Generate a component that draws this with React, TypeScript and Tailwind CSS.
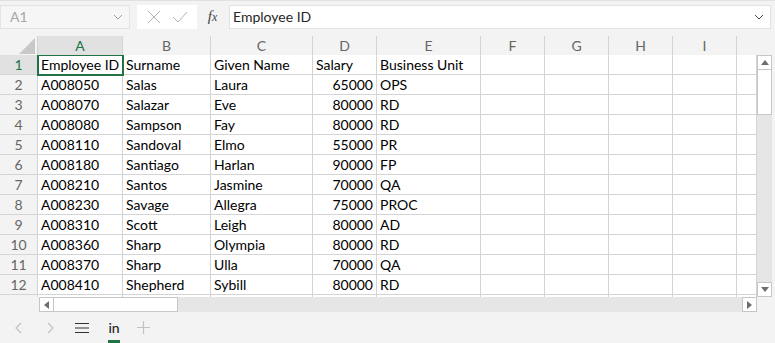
import React from "react";

type Col = { key: string; label: string; w: string; right?: boolean };

const cols: Col[] = [
  { key: "id", label: "A", w: "w-[85px]" },
  { key: "sn", label: "B", w: "w-[88px]" },
  { key: "gn", label: "C", w: "w-[102px]" },
  { key: "sal", label: "D", w: "w-[64px]", right: true },
  { key: "bu", label: "E", w: "w-[104px]" },
  { key: "f", label: "F", w: "w-[64px]" },
  { key: "g", label: "G", w: "w-[64px]" },
  { key: "h", label: "H", w: "w-[64px]" },
  { key: "i", label: "I", w: "w-[64px]" },
  { key: "j", label: "", w: "w-[20px]" },
];

const rows: string[][] = [
  ["Employee ID", "Surname", "Given Name", "Salary", "Business Unit"],
  ["A008050", "Salas", "Laura", "65000", "OPS"],
  ["A008070", "Salazar", "Eve", "80000", "RD"],
  ["A008080", "Sampson", "Fay", "80000", "RD"],
  ["A008110", "Sandoval", "Elmo", "55000", "PR"],
  ["A008180", "Santiago", "Harlan", "90000", "FP"],
  ["A008210", "Santos", "Jasmine", "70000", "QA"],
  ["A008230", "Savage", "Allegra", "75000", "PROC"],
  ["A008310", "Scott", "Leigh", "80000", "AD"],
  ["A008360", "Sharp", "Olympia", "80000", "RD"],
  ["A008370", "Sharp", "Ulla", "70000", "QA"],
  ["A008410", "Shepherd", "Sybill", "80000", "RD"],
  ["", "", "", "", ""],
];

function Chevron({ className }: { className?: string }) {
  return (
    <svg width="10" height="6" viewBox="0 0 10 6" className={className}>
      <path d="M1 1l4 4 4-4" fill="none" stroke="currentColor" strokeWidth="1" />
    </svg>
  );
}

function Toolbar() {
  return (
    <div className="flex h-[30px] items-center pt-[1px]">
      <div className="flex h-[24px] w-[130px] items-center justify-between border border-[#e3e3e3] bg-[#f6f6f6] pl-[9px] pr-[6px] text-[14px] text-[#a6a6a6]">
        <span>A1</span>
        <Chevron className="text-[#a0a0a0]" />
      </div>
      <div className="ml-[7px] flex h-[24px] items-center">
        <div className="flex h-full w-[60px] items-center justify-around bg-white px-[4px]">
          <svg width="14" height="14" viewBox="0 0 14 14">
            <path d="M1 1l12 12M13 1L1 13" stroke="#b3b3b3" strokeWidth="1" />
          </svg>
          <svg width="16" height="12" viewBox="0 0 16 12">
            <path d="M1 6l5 5L15 1" fill="none" stroke="#b3b3b3" strokeWidth="1" />
          </svg>
        </div>
        <div className="flex w-[31px] items-center justify-center font-['Liberation_Serif',serif] text-[15px] italic text-[#444]">
          f<span className="text-[12px]">x</span>
        </div>
      </div>
      <div className="ml-[1px] mr-[4px] flex h-[24px] flex-1 items-center justify-between border border-[#e3e3e3] bg-white pl-[3px] pr-[6px] text-[14px] text-[#262626]">
        <span>Employee ID</span>
        <Chevron className="text-[#444]" />
      </div>
    </div>
  );
}

function HeaderRow() {
  return (
    <div className="flex h-[19px] w-[772px] bg-[#f3f3f3] text-[14px] leading-[19px] text-[#666]">
      <div className="relative w-[38px] border-r border-[#d4d4d4]">
        <svg width="16" height="16" viewBox="0 0 16 16" className="absolute bottom-[1px] right-[2px]">
          <path d="M16 0L16 16L0 16Z" fill="#c8c8c8" />
        </svg>
      </div>
      {cols.map((c, i) => (
        <div
          key={c.key}
          className={`${c.w} shrink-0 text-center ${
            i === 0 ? "bg-[#e1e1e1] text-[#217346]" : ""
          } ${i < cols.length - 1 ? "border-r border-[#d4d4d4]" : ""}`}
        >
          {c.label}
        </div>
      ))}
    </div>
  );
}

function Grid() {
  return (
    <div className="flex h-[242px]">
      <div className="relative h-full w-[757px] overflow-hidden bg-white">
        {rows.map((r, ri) => (
          <div key={ri} className="flex h-[20px] text-[14px] leading-[19px]">
            <div
              className={`w-[38px] shrink-0 border-b border-r border-[#d4d4d4] text-center ${
                ri === 0 ? "bg-[#e1e1e1] text-[#217346]" : "bg-[#f3f3f3] text-[#666]"
              }`}
            >
              {ri < 12 ? ri + 1 : ""}
            </div>
            {cols.map((c, ci) => (
              <div
                key={c.key}
                className={`${c.w} shrink-0 overflow-hidden whitespace-nowrap border-b border-r border-[#d4d4d4] px-[3px] text-black ${
                  c.right && ri > 0 ? "text-right" : "text-left"
                }`}
              >
                {r[ci] ?? ""}
              </div>
            ))}
          </div>
        ))}
        <div className="pointer-events-none absolute left-[37px] top-[-1px] h-[22px] w-[87px] border-2 border-[#217346]" />
      </div>
      <div className="flex w-[15px] flex-col bg-[#e6e6e6]">
        <div className="flex h-[15px] items-center justify-center border border-[#c6c6c6] bg-white">
          <svg width="8" height="5" viewBox="0 0 8 5">
            <path d="M0 5L4 0L8 5Z" fill="#6d6d6d" />
          </svg>
        </div>
        <div className="h-[45px] border border-t-0 border-[#c6c6c6] bg-white" />
        <div className="flex-1" />
        <div className="flex h-[15px] items-center justify-center border border-[#c6c6c6] bg-white">
          <svg width="8" height="5" viewBox="0 0 8 5">
            <path d="M0 0L4 5L8 0Z" fill="#6d6d6d" />
          </svg>
        </div>
      </div>
    </div>
  );
}

function HScroll() {
  return (
    <div className="flex h-[15px] pl-[39px]">
      <div className="flex w-[718px] bg-[#e6e6e6]">
        <div className="flex w-[15px] items-center justify-center border border-[#c6c6c6] bg-white">
          <svg width="5" height="8" viewBox="0 0 5 8">
            <path d="M5 0L0 4L5 8Z" fill="#6d6d6d" />
          </svg>
        </div>
        <div className="w-[124px] border border-l-0 border-[#c6c6c6] bg-white" />
        <div className="flex-1" />
        <div className="flex w-[15px] items-center justify-center border border-[#c6c6c6] bg-white">
          <svg width="5" height="8" viewBox="0 0 5 8">
            <path d="M0 0L5 4L0 8Z" fill="#6d6d6d" />
          </svg>
        </div>
      </div>
    </div>
  );
}

function Tabs() {
  return (
    <div className="flex h-[31px] items-center text-[14px]">
      <div className="flex w-[36px] justify-center">
        <svg width="8" height="12" viewBox="0 0 8 12">
          <path d="M7 1L2 6l5 5" fill="none" stroke="#c2c2c2" strokeWidth="1.2" />
        </svg>
      </div>
      <div className="flex w-[30px] justify-center">
        <svg width="8" height="12" viewBox="0 0 8 12">
          <path d="M1 1l5 5-5 5" fill="none" stroke="#c2c2c2" strokeWidth="1.2" />
        </svg>
      </div>
      <div className="flex w-[32px] justify-center">
        <svg width="14" height="12" viewBox="0 0 14 12">
          <path d="M0 1.5h14M0 6h14M0 10.5h14" stroke="#333" strokeWidth="1.2" />
        </svg>
      </div>
      <div className="relative flex h-full w-[32px] items-center justify-center text-[#262626]">
        <span className="font-medium">in</span>
        <div className="absolute bottom-0 left-[10px] h-[3px] w-[12px] bg-[#217346]" />
      </div>
      <div className="flex w-[26px] justify-center">
        <svg width="13" height="13" viewBox="0 0 13 13">
          <path d="M6.5 0v13M0 6.5h13" stroke="#c2c2c2" strokeWidth="1.2" />
        </svg>
      </div>
    </div>
  );
}

export default function App() {
  return (
    <div className="h-[343px] w-[775px] overflow-hidden border-t border-[#e0e0e0] bg-[#f3f3f3] font-['Lato','Noto_Sans',sans-serif]">
      <Toolbar />
      <div className="h-[5px]" />
      <HeaderRow />
      <Grid />
      <HScroll />
      <Tabs />
    </div>
  );
}
